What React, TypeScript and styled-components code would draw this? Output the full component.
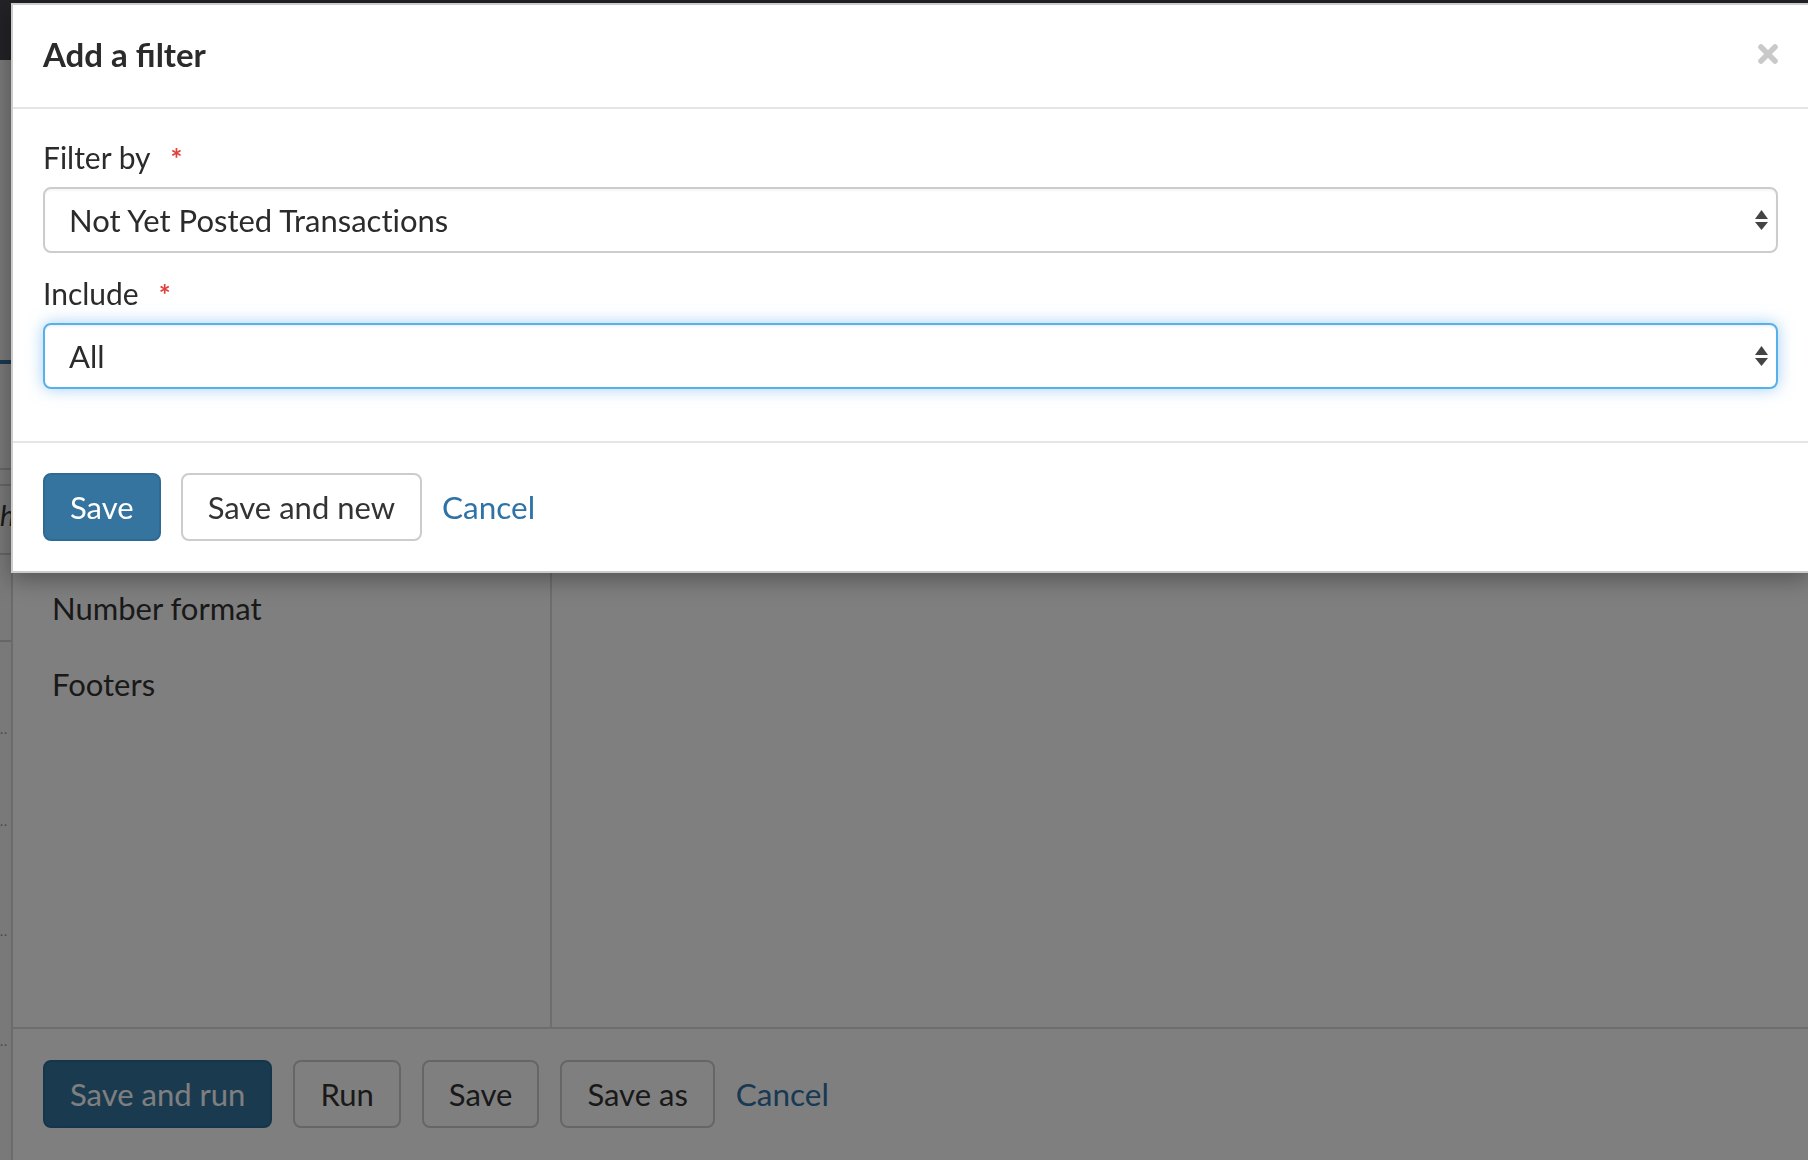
import React from "react";
import styled, { createGlobalStyle } from "styled-components";

const GlobalStyle = createGlobalStyle`
  html, body {
    margin: 0;
    padding: 0;
    width: 1808px;
    height: 1160px;
    overflow: hidden;
    background: #ffffff;
    font-family: "Lato", "Open Sans", sans-serif;
    font-variant-ligatures: no-common-ligatures;
    color: #333333;
  }
  * {
    box-sizing: border-box;
  }
`;

// ---------- page underneath the modal ----------

const Page = styled.div`
  display: flex;
  flex-direction: column;
  width: 1808px;
  height: 1160px;
`;

const Navbar = styled.header`
  height: 60px;
  flex-shrink: 0;
  background: #46464e;
`;

const Body = styled.div`
  flex: 1;
  display: flex;
`;

const Gutter = styled.div`
  width: 11px;
  flex-shrink: 0;
  display: flex;
  flex-direction: column;
  background: #f2f2f2;
  overflow: hidden;
`;

const GutterBar = styled.div<{ $mt: number }>`
  margin-top: ${(p) => p.$mt}px;
  height: 4px;
  background: #3474a0;
`;

const GutterRule = styled.div<{ $mt: number }>`
  margin-top: ${(p) => p.$mt}px;
  height: 2px;
  background: #cccccc;
`;

const GutterGlyph = styled.div<{ $mt: number }>`
  margin-top: ${(p) => p.$mt}px;
  height: 30px;
  font-size: 28px;
  line-height: 30px;
  font-style: italic;
  color: #333;
  overflow: hidden;
`;

const GutterDots = styled.div<{ $mt: number }>`
  margin-top: ${(p) => p.$mt}px;
  height: 10px;
  font-size: 12px;
  line-height: 10px;
  letter-spacing: 1px;
  color: #999;
`;

const Main = styled.div`
  flex: 1;
  display: flex;
  flex-direction: column;
  border-left: 2px solid #d6d6d6;
`;

const Workspace = styled.div`
  flex: 1;
  display: flex;
`;

const Sidebar = styled.nav`
  width: 539px;
  border-right: 2px solid #dddddd;
  padding: 510px 0 0 39px;
  display: flex;
  flex-direction: column;
`;

const SideItem = styled.div`
  font-size: 31px;
  line-height: 40px;
  padding: 18px 0;
  color: #333;
`;

const Content = styled.div`
  flex: 1;
`;

const BottomBar = styled.div`
  height: 133px;
  border-top: 2px solid #dddddd;
  padding: 31px 30px 0;
  display: flex;
  align-items: flex-start;
  gap: 21px;
`;

// ---------- shared controls ----------

const Button = styled.button<{ $primary?: boolean }>`
  height: 68px;
  padding: 0 25px;
  border-radius: 8px;
  border: 2px solid ${(p) => (p.$primary ? "#2e6a94" : "#cccccc")};
  background: ${(p) => (p.$primary ? "#34749f" : "#ffffff")};
  color: ${(p) => (p.$primary ? "#ffffff" : "#333333")};
  font-family: "Lato", "Open Sans", sans-serif;
  font-variant-ligatures: no-common-ligatures;
  font-size: 31px;
  line-height: 1;
  cursor: pointer;
`;

const LinkButton = styled.a`
  height: 68px;
  display: flex;
  align-items: center;
  font-size: 31.5px;
  color: #2f72a6;
  text-decoration: none;
  cursor: pointer;
`;

// ---------- modal ----------

const Backdrop = styled.div`
  position: fixed;
  inset: 0;
  background: rgba(0, 0, 0, 0.5);
`;

const Modal = styled.div`
  position: absolute;
  top: 3px;
  left: 11px;
  right: -2px;
  background: #ffffff;
  border: 2px solid rgba(0, 0, 0, 0.2);
  box-shadow: 0 6px 22px rgba(0, 0, 0, 0.35);
`;

const ModalHeader = styled.div`
  display: flex;
  align-items: center;
  justify-content: space-between;
  padding: 26px 30px 30px 30px;
  border-bottom: 2px solid #e5e5e5;
`;

const Title = styled.h4`
  margin: 0;
  font-size: 33px;
  line-height: 46px;
  font-weight: 700;
  color: #2b2b2b;
  font-variant-ligatures: common-ligatures;
`;

const CloseButton = styled.button`
  border: 0;
  background: none;
  padding: 0;
  display: flex;
  cursor: pointer;
`;

const ModalBody = styled.div`
  padding: 28px 30px 32px 30px;
`;

const FormGroup = styled.div`
  margin-bottom: 20px;
`;

const Label = styled.label`
  display: flex;
  align-items: center;
  gap: 20px;
  height: 40px;
  margin-bottom: 10px;
  font-size: 30px;
  color: #2b2b2b;
`;

const Required = styled.span`
  color: #e0403c;
  font-size: 28px;
  font-weight: 700;
  align-self: flex-start;
  line-height: 26px;
  margin-top: 8px;
`;

const SelectBox = styled.div<{ $focused?: boolean }>`
  height: 66px;
  display: flex;
  align-items: center;
  justify-content: space-between;
  padding: 0 8px 0 24px;
  border-radius: 8px;
  border: 2px solid ${(p) => (p.$focused ? "#56b1ea" : "#cccccc")};
  box-shadow: ${(p) =>
    p.$focused
      ? "inset 0 2px 2px rgba(0,0,0,0.05), 0 0 16px rgba(102, 175, 233, 0.6)"
      : "inset 0 2px 2px rgba(0,0,0,0.04)"};
  font-size: 31px;
  color: #2b2b2b;
  background: #fff;
`;

const ModalFooter = styled.div`
  display: flex;
  align-items: center;
  gap: 20px;
  padding: 30px 30px 30px 30px;
  border-top: 2px solid #e5e5e5;
`;

const SelectArrows = () => (
  <svg width="13" height="20" viewBox="0 0 13 20" aria-hidden="true">
    <polygon points="0,9 6.5,0 13,9" fill="#444" />
    <polygon points="0,12 13,12 6.5,20" fill="#444" />
  </svg>
);

const CloseIcon = () => (
  <svg width="20" height="20" viewBox="0 0 20 20" aria-hidden="true">
    <path
      d="M3 3 L17 17 M17 3 L3 17"
      stroke="#c9c9c9"
      strokeWidth="5.5"
      strokeLinecap="round"
    />
  </svg>
);

const App = () => {
  return (
    <>
      <GlobalStyle />
      <Page>
        <Navbar />
        <Body>
          <Gutter>
            <GutterBar $mt={300} />
            <GutterRule $mt={104} />
            <GutterRule $mt={14} />
            <GutterGlyph $mt={14}>h</GutterGlyph>
            <GutterRule $mt={23} />
            <GutterRule $mt={85} />
            <GutterDots $mt={86}>··</GutterDots>
            <GutterDots $mt={82}>··</GutterDots>
            <GutterDots $mt={100}>··</GutterDots>
            <GutterDots $mt={100}>··</GutterDots>
          </Gutter>
          <Main>
            <Workspace>
              <Sidebar>
                <SideItem>Number format</SideItem>
                <SideItem>Footers</SideItem>
              </Sidebar>
              <Content />
            </Workspace>
            <BottomBar>
              <Button $primary>Save and run</Button>
              <Button>Run</Button>
              <Button>Save</Button>
              <Button>Save as</Button>
              <LinkButton>Cancel</LinkButton>
            </BottomBar>
          </Main>
        </Body>
      </Page>

      <Backdrop />

      <Modal role="dialog">
        <ModalHeader>
          <Title>Add a filter</Title>
          <CloseButton aria-label="Close">
            <CloseIcon />
          </CloseButton>
        </ModalHeader>
        <ModalBody>
          <FormGroup>
            <Label>
              Filter by <Required>*</Required>
            </Label>
            <SelectBox>
              <span>Not Yet Posted Transactions</span>
              <SelectArrows />
            </SelectBox>
          </FormGroup>
          <FormGroup>
            <Label>
              Include <Required>*</Required>
            </Label>
            <SelectBox $focused>
              <span>All</span>
              <SelectArrows />
            </SelectBox>
          </FormGroup>
        </ModalBody>
        <ModalFooter>
          <Button $primary>Save</Button>
          <Button>Save and new</Button>
          <LinkButton>Cancel</LinkButton>
        </ModalFooter>
      </Modal>
    </>
  );
};

export default App;
